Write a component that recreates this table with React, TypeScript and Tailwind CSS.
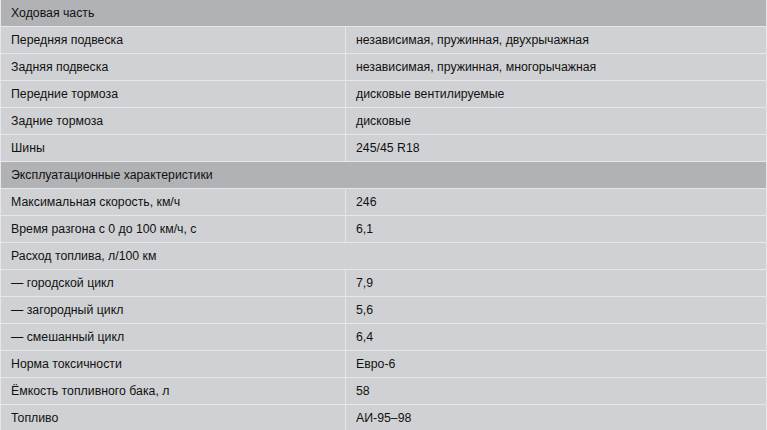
type Row =
  | { kind: "section"; label: string }
  | { kind: "full"; label: string }
  | { kind: "pair"; label: string; value: string };

const rows: Row[] = [
  { kind: "section", label: "Ходовая часть" },
  { kind: "pair", label: "Передняя подвеска", value: "независимая, пружинная, двухрычажная" },
  { kind: "pair", label: "Задняя подвеска", value: "независимая, пружинная, многорычажная" },
  { kind: "pair", label: "Передние тормоза", value: "дисковые вентилируемые" },
  { kind: "pair", label: "Задние тормоза", value: "дисковые" },
  { kind: "pair", label: "Шины", value: "245/45 R18" },
  { kind: "section", label: "Эксплуатационные характеристики" },
  { kind: "pair", label: "Максимальная скорость, км/ч", value: "246" },
  { kind: "pair", label: "Время разгона с 0 до 100 км/ч, с", value: "6,1" },
  { kind: "full", label: "Расход топлива, л/100 км" },
  { kind: "pair", label: "— городской цикл", value: "7,9" },
  { kind: "pair", label: "— загородный цикл", value: "5,6" },
  { kind: "pair", label: "— смешанный цикл", value: "6,4" },
  { kind: "pair", label: "Норма токсичности", value: "Евро-6" },
  { kind: "pair", label: "Ёмкость топливного бака, л", value: "58" },
  { kind: "pair", label: "Топливо", value: "АИ-95–98" },
];

export default function App() {
  return (
    <div
      className="h-[430px] w-full overflow-hidden bg-white"
      style={{ fontFamily: '"Liberation Sans", Arial, sans-serif' }}
    >
      <div className="grid grid-cols-[344px_1fr] gap-px bg-[#e6e7e9] pl-px pr-px text-[12.3px] text-[#111]">
        {rows.map((r, i) =>
          r.kind === "pair" ? (
            <div key={i} className="contents">
              <div className="flex h-[26px] items-center bg-[#d0d1d4] pl-[10px]">{r.label}</div>
              <div className="flex h-[26px] items-center bg-[#d0d1d4] pl-[10px]">{r.value}</div>
            </div>
          ) : (
            <div
              key={i}
              className={
                r.kind === "section"
                  ? "col-span-2 flex h-[26px] items-center bg-[#b1b2b5] pl-[10px]"
                  : "col-span-2 flex h-[26px] items-center bg-[#d0d1d4] pl-[10px]"
              }
            >
              {r.label}
            </div>
          )
        )}
      </div>
    </div>
  );
}
